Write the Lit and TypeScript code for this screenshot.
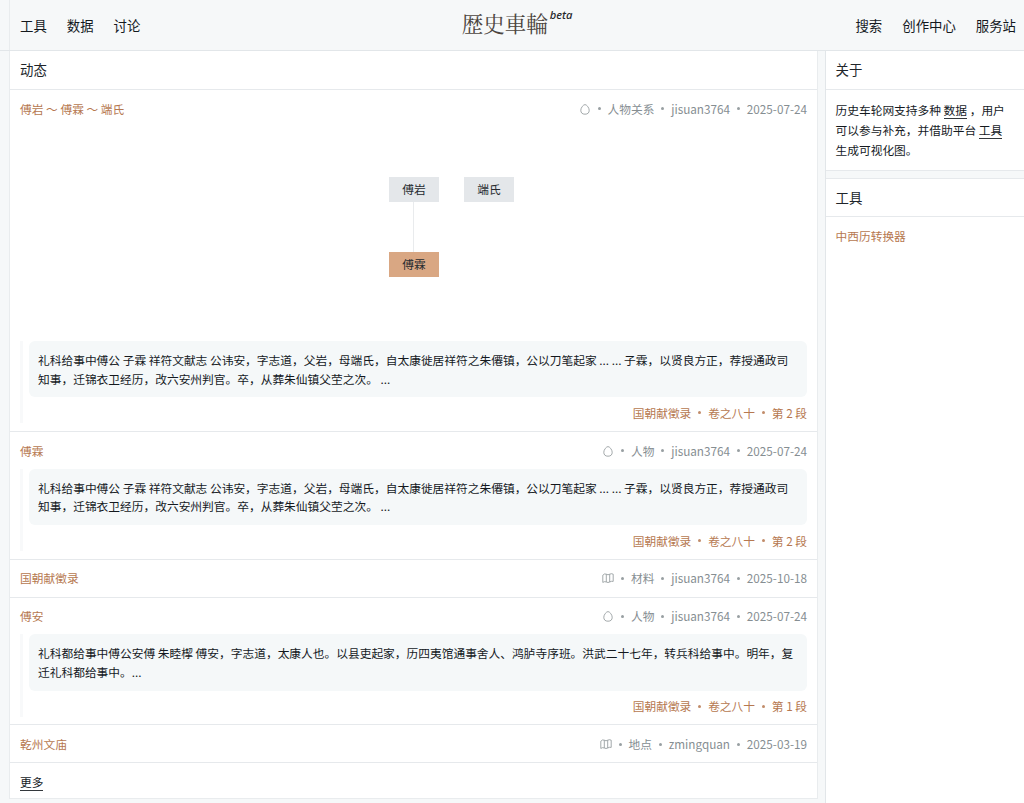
import { LitElement, html, css, svg, nothing } from "lit";
import { customElement, property } from "lit/decorators.js";

type Entry = {
  title: string;
  icon: "drop" | "map";
  kind: string;
  user: string;
  date: string;
  quote?: string;
  source?: string;
  graph?: boolean;
};

const FU_LIN =
  "礼科给事中傅公 子霖 祥符文献志 公讳安，字志道，父岩，母端氏，自太康徙居祥符之朱僊镇，公以刀笔起家 ... ... 子霖，以贤良方正，荐授通政司知事，迁锦衣卫经历，改六安州判官。卒，从葬朱仙镇父茔之次。 ...";

const ENTRIES: Entry[] = [
  { title: "傅岩 ～ 傅霖 ～ 端氏", icon: "drop", kind: "人物关系", user: "jisuan3764", date: "2025-07-24", quote: FU_LIN, source: "第 2 段", graph: true },
  { title: "傅霖", icon: "drop", kind: "人物", user: "jisuan3764", date: "2025-07-24", quote: FU_LIN, source: "第 2 段" },
  { title: "国朝献徵录", icon: "map", kind: "材料", user: "jisuan3764", date: "2025-10-18" },
  {
    title: "傅安", icon: "drop", kind: "人物", user: "jisuan3764", date: "2025-07-24",
    quote: "礼科都给事中傅公安傅 朱睦㮮 傅安，字志道，太康人也。以县吏起家，历四夷馆通事舍人、鸿胪寺序班。洪武二十七年，转兵科给事中。明年，复迁礼科都给事中。...",
    source: "第 1 段",
  },
  { title: "乾州文庙", icon: "map", kind: "地点", user: "zmingquan", date: "2025-03-19" },
];

const ICONS = {
  drop: svg`<path d="M6 1.6C4.4 1.6 1.8 4.7 1.8 7.2a4.2 4 0 0 0 8.4 0C10.2 4.7 7.6 1.6 6 1.6Z"/>`,
  map: svg`<path d="M.8 3.2 Q2.6 1.2 4.3 2.2 Q6 3.4 7.7 2.2 Q9.4 1.2 11.2 2.2V9.4Q9.4 8.9 7.7 10Q6 11 4.3 10Q2.6 9.1 .8 10.4ZM4.3 2.2V10M7.7 2.2V10"/>`,
};

@customElement("feed-entry")
class FeedEntry extends LitElement {
  @property({ attribute: false }) entry!: Entry;

  static styles = css`
    :host { display: block; padding: 0 10px; border-bottom: 1px solid #e6e9ec; }
    .head { display: flex; justify-content: space-between; align-items: center; height: 36.8px; padding-top: 0.6px; box-sizing: border-box; }
    .title, .source { color: #b67850; }
    .meta { display: flex; align-items: center; color: #868e92; }
    .icon { width: 12px; height: 12px; fill: none; stroke: #92999c; stroke-width: 0.85; }
    .dot { width: 16.8px; display: flex; justify-content: center; align-items: center; }
    .dot::before { content: ""; width: 3px; height: 3px; border-radius: 50%; background: currentColor; opacity: 0.85; }
    .graph { height: 214px; position: relative; }
    .node {
      position: absolute; width: 50px; height: 25px; line-height: 24px; text-align: center;
      background: #e4e7ea; color: #272b30;
    }
    .father { left: 369px; top: 50px; }
    .mother { left: 444px; top: 50px; }
    .child { left: 369px; top: 125px; background: #d9a783; }
    .edge { position: absolute; left: 393px; top: 75px; width: 1px; height: 50px; background: #e9ebed; }
    .quote { border-left: 3px solid #f8f9fa; padding: 0 0 0 6px; margin-bottom: 7.5px; }
    .text {
      background: #f5f8f9; border-radius: 6px; padding: 10px 9px; line-height: 18.7px;
      color: #14191e; height: 36.5px;
    }
    .source { display: flex; justify-content: flex-end; align-items: center; height: 21px; padding-top: 5px; }
  `;

  render() {
    const e = this.entry;
    const dot = html`<span class="dot"></span>`;
    return html`
      <div class="head">
        <span class="title">${e.title}</span>
        <span class="meta">
          <svg class="icon" viewBox="0 0 12 12">${ICONS[e.icon]}</svg>${dot}<span>${e.kind}</span>${dot}<span>${e.user}</span>${dot}<span>${e.date}</span>
        </span>
      </div>
      ${e.graph
        ? html`<div class="graph">
            <div class="edge"></div>
            <div class="node father">傅岩</div>
            <div class="node mother">端氏</div>
            <div class="node child">傅霖</div>
          </div>`
        : nothing}
      ${e.quote
        ? html`<div class="quote">
            <div class="text">${e.quote}</div>
            <div class="source"><span>国朝献徵录</span>${dot}<span>卷之八十</span>${dot}<span>${e.source}</span></div>
          </div>`
        : nothing}
    `;
  }
}

@customElement("app-root")
class AppRoot extends LitElement {
  static styles = css`
    :host {
      display: flex; flex-direction: column; height: 803px; overflow: hidden;
      background: #f6f8f9; color: #20252a;
      font: 11.73px/18px "Noto Sans CJK SC", sans-serif;
    }
    .bar {
      display: grid; grid-template-columns: 1fr auto 1fr; align-items: center;
      height: 50px; flex: none; margin-left: 9px; padding: 0 8px 0 10px;
      border-left: 1px solid #e9ecee; font-size: 13.4px;
    }
    .wrap { border-bottom: 1px solid #e2e6e9; flex: none; }
    .nav { display: flex; gap: 20px; color: #14191e; }
    .right { justify-content: flex-end; }
    .logo { display: flex; align-items: flex-start; height: 34px; color: #4c4540; margin-left: -2px; }
    .name { font: 400 21.5px/29px "Noto Serif CJK JP", "Noto Sans CJK JP", sans-serif; }
    .beta { font: italic 500 11.2px/14px "Noto Sans", sans-serif; color: #25282b; margin-left: 2px; }
    .body { display: flex; flex: 1; gap: 7px; padding-left: 9px; min-height: 0; }
    .feed { width: 807px; background: #fff; border: 1px solid #e9ecee; border-top: 0; height: 747px; }
    .side { flex: 1; border-left: 1px solid #e2e6e9; background: #fff; }
    .title { height: 38.2px; line-height: 37.5px; padding-left: 10px; font-size: 13.4px; border-bottom: 1px solid #e6e9ec; }
    .about { height: 70px; padding: 10.3px 10px 0 9.5px; line-height: 20px; color: #14191e; }
    .gap { height: 7px; background: #f6f8f9; border: solid #e6e9ec; border-width: 1px 0; }
    .side .title { padding-left: 9.5px; }
    .side .tools { height: 37px; }
    .under { display: inline-block; line-height: 16px; border-bottom: 1px solid #33383c; }
    .link { padding: 10px 9.5px; color: #b67850; }
    .more { padding: 9.5px 10px 0; color: #14191e; }
  `;

  render() {
    return html`
      <header class="wrap">
        <div class="bar">
          <nav class="nav"><span>工具</span><span>数据</span><span>讨论</span></nav>
          <div class="logo"><span class="name">歴史車輪</span><span class="beta">beta</span></div>
          <nav class="nav right"><span>搜索</span><span>创作中心</span><span>服务站</span></nav>
        </div>
      </header>
      <div class="body">
        <main class="feed">
          <div class="title">动态</div>
          ${ENTRIES.map((e) => html`<feed-entry .entry=${e}></feed-entry>`)}
          <div class="more"><span class="under">更多</span></div>
        </main>
        <aside class="side">
          <div class="title">关于</div>
          <div class="about">历史车轮网支持多种 <span class="under">数据</span> ，用户<br />可以参与补充，并借助平台 <span class="under">工具</span><br />生成可视化图。</div>
          <div class="gap"></div>
          <div class="title tools">工具</div>
          <div class="link">中西历转换器</div>
        </aside>
      </div>
    `;
  }
}
